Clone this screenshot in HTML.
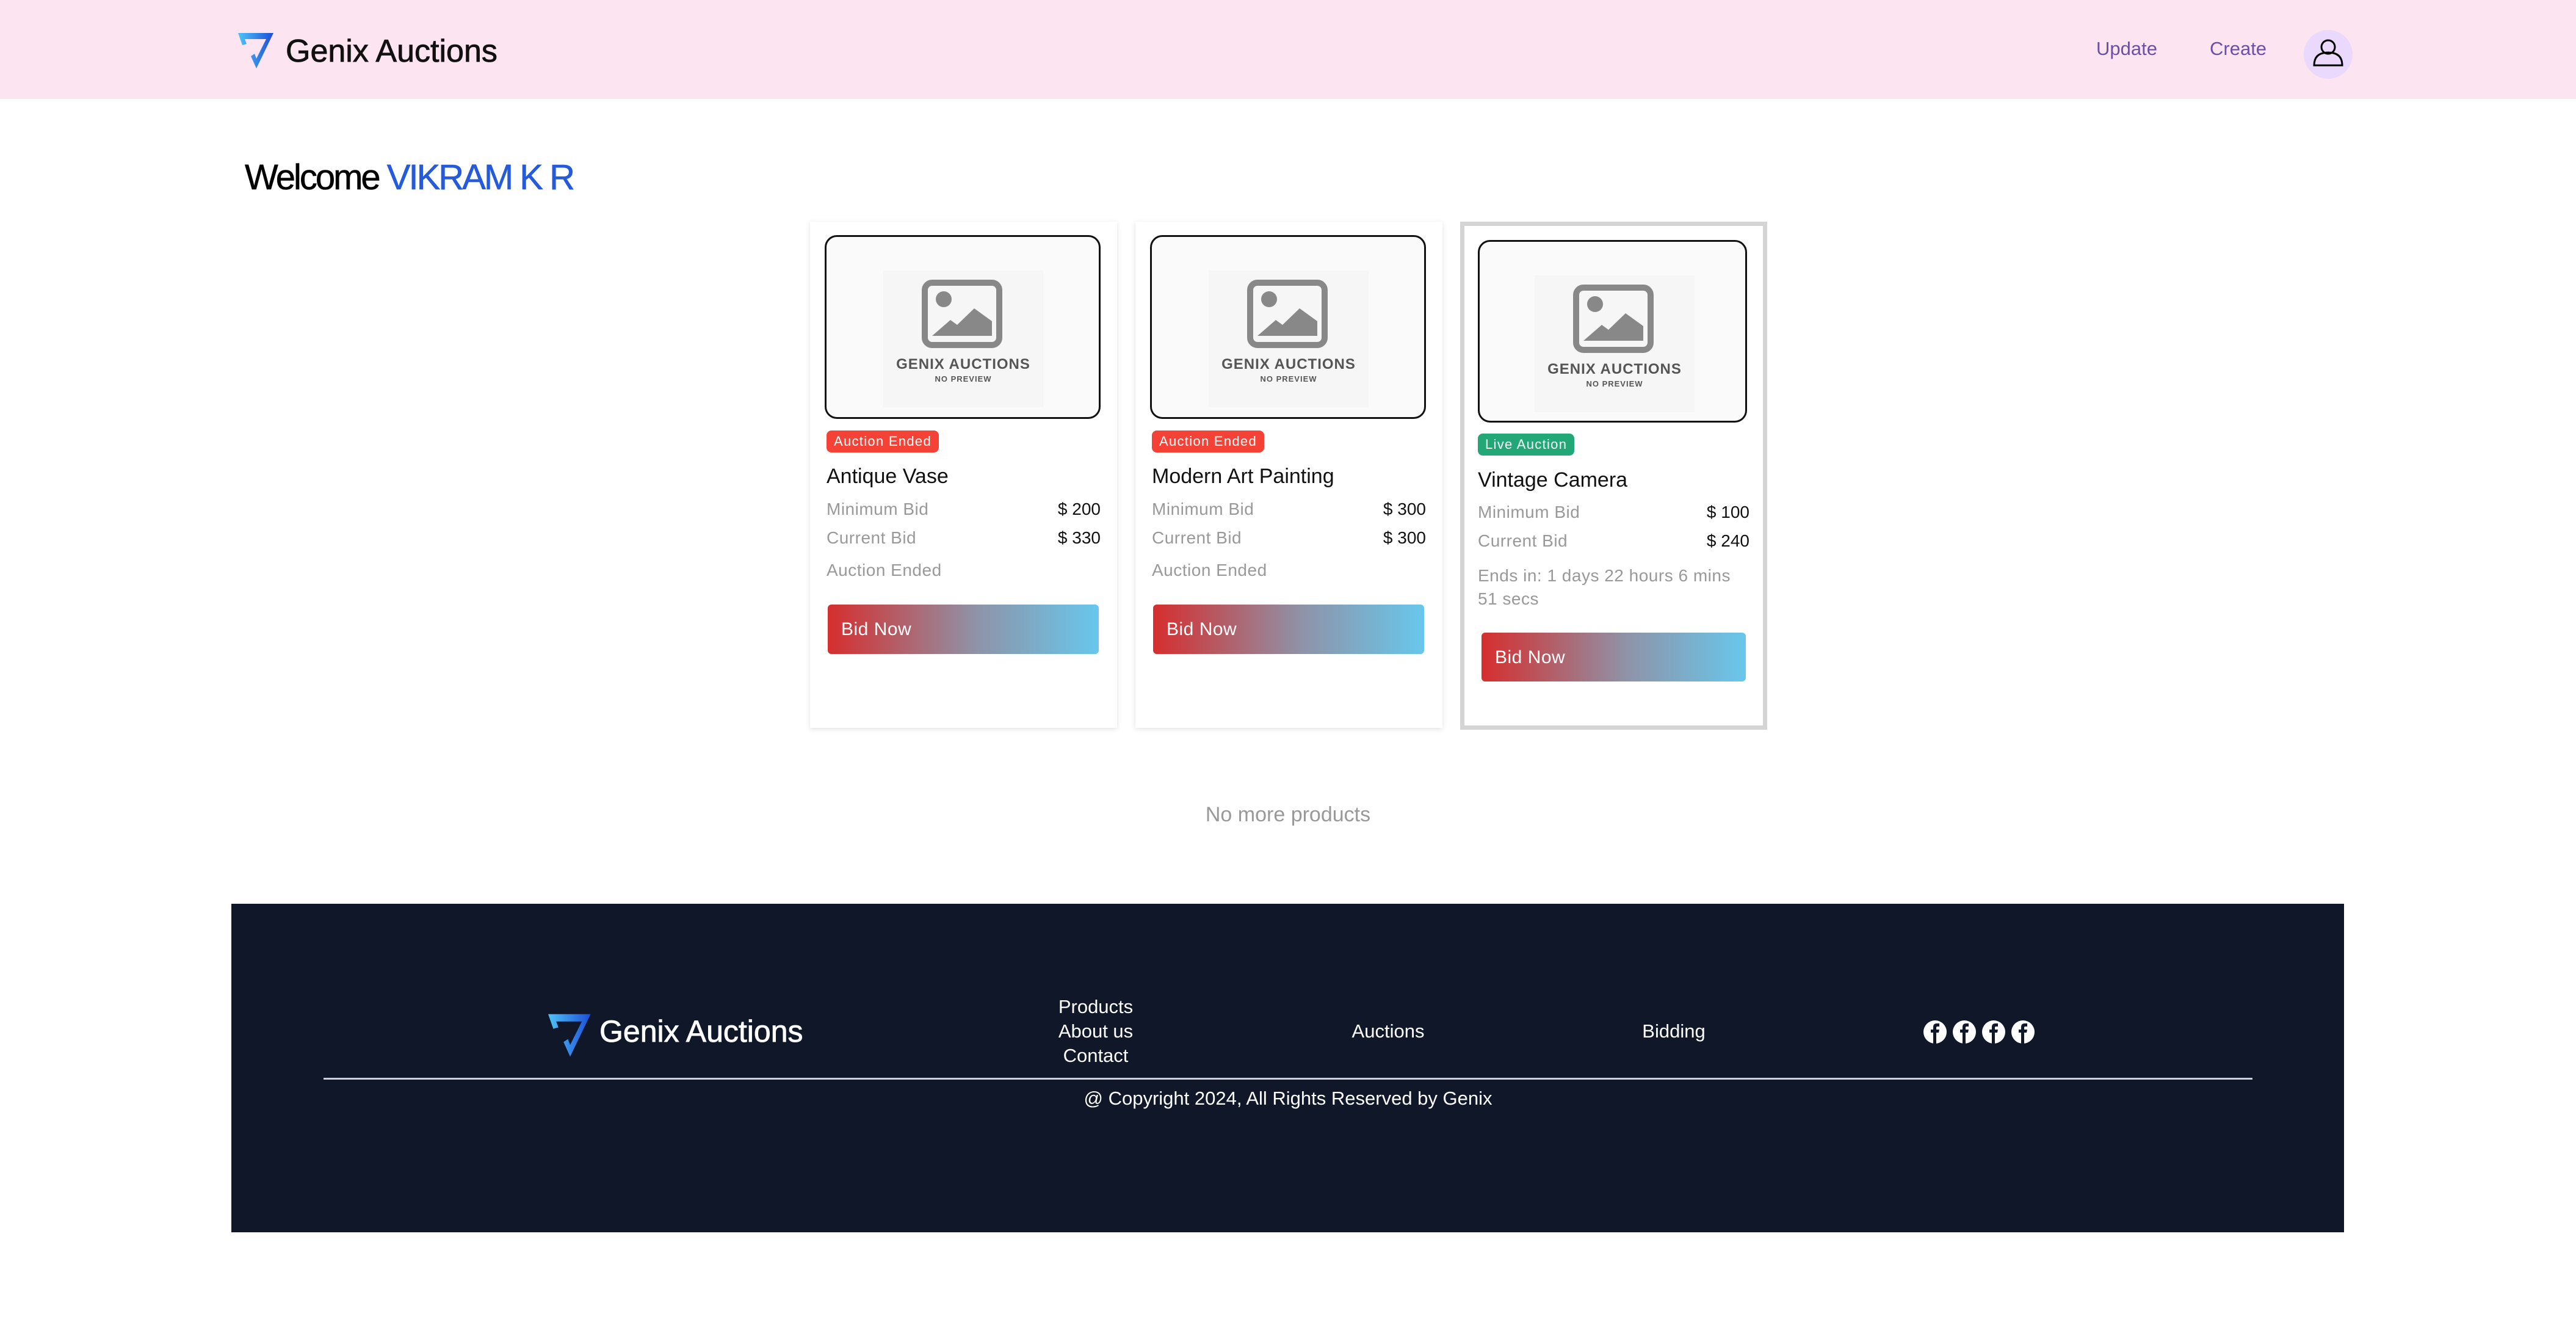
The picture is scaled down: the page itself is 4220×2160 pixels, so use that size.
<!DOCTYPE html>
<html><head><meta charset="utf-8"><style>
*{margin:0;padding:0;box-sizing:border-box}
body{width:4220px;height:2160px;background:#fff;font-family:"Liberation Sans",sans-serif;position:relative;overflow:hidden}
.a{position:absolute;white-space:nowrap}
.hdr{position:absolute;left:0;top:0;width:4220px;height:162px;background:#fde4f1}
.card{position:absolute;top:363px;width:503px;height:829px;background:#fff;box-shadow:0 2px 8px rgba(0,0,0,.12)}
.img{position:absolute;left:24px;top:22px;width:452px;height:301px;border:3px solid #111;border-radius:20px;background:#fafafa;overflow:hidden}
.ph{position:absolute;left:93px;top:55px;width:262px;height:224px;background:#f6f6f6}
.ph .t1{position:absolute;left:0;width:262px;text-align:center;top:140px;font-weight:bold;font-size:24px;color:#555;letter-spacing:1px}
.ph .t2{position:absolute;left:0;width:262px;text-align:center;top:170px;font-weight:bold;font-size:13px;color:#555;letter-spacing:1px}
.badge{position:absolute;left:27px;height:36px;border-radius:8px;color:#fff;font-size:22px;line-height:36px;padding:0 12px;letter-spacing:1.3px}
.ttl{position:absolute;left:27px;font-size:34px;color:#111;font-weight:500}
.lbl{position:absolute;left:27px;font-size:28px;color:#999;letter-spacing:.5px}
.val{position:absolute;right:27px;font-size:28px;color:#111}
.btn{position:absolute;left:29px;width:444px;height:81px;border-radius:6px;background:linear-gradient(90deg,#d62e2e,#8e93a8 55%,#68c7ec);color:#fff;font-size:30px;line-height:81px;padding-left:22px;letter-spacing:.5px}
.foot{position:absolute;left:379px;top:1480px;width:3461px;height:538px;background:#0f1729}
.fl{position:absolute;color:#fff;font-size:31px;white-space:nowrap;transform:translateX(-50%)}
</style></head><body>
<div class="hdr"></div>
<svg class="a" style="left:380px;top:40px" width="80" height="80" viewBox="0 0 80 80"><defs><linearGradient id="g" x1="0" x2="1"><stop offset="0" stop-color="#4fc3f7"/><stop offset="1" stop-color="#1d4ed8"/></linearGradient></defs><polygon points="10,14 68,14 40,72 31,52 37,48 40,56 56,24 21,24 24,32 17,34" fill="url(#g)"/></svg>
<div class="a" style="left:468px;top:54px;font-size:52px;color:#111;-webkit-text-stroke:0.8px #111">Genix Auctions</div>
<div class="a" style="left:3434px;top:62px;font-size:31px;color:#6b4fa8">Update</div>
<div class="a" style="left:3620px;top:62px;font-size:31px;color:#6b4fa8">Create</div>
<div class="a" style="left:3774px;top:49px;width:80px;height:80px;border-radius:50%;background:#ead9fc"></div>
<svg class="a" style="left:3786px;top:60px" width="56" height="56" viewBox="0 0 56 56"><circle cx="28" cy="17" r="11" fill="none" stroke="#000" stroke-width="3"/><path d="M5 47 Q5 26 28 26 Q51 26 51 47 Z" fill="none" stroke="#000" stroke-width="3"/></svg>
<div class="a" style="left:401px;top:257px;font-size:58px;color:#000;letter-spacing:-3px;-webkit-text-stroke:0.6px currentColor">Welcome <span style="color:#255bdb">VIKRAM K R</span></div>

<!-- card 1 -->
<div class="card" style="left:1327px">
<div class="img"><div class="ph"><svg style="position:absolute;left:63px;top:15px" width="132" height="112" viewBox="0 0 132 112"><rect x="5" y="5" width="122" height="102" rx="12" fill="none" stroke="#888" stroke-width="10"/><circle cx="36" cy="32" r="13" fill="#888"/><path d="M17 92 L47 66 L58 74 L86 47 L115 68 L115 92 Z" fill="#888"/></svg><div class="t1">GENIX AUCTIONS</div><div class="t2">NO PREVIEW</div></div></div>
<div class="badge" style="top:342px;background:#f44336">Auction Ended</div>
<div class="ttl" style="top:398px">Antique Vase</div>
<div class="lbl" style="top:455px">Minimum Bid</div><div class="val" style="top:455px">$ 200</div>
<div class="lbl" style="top:502px">Current Bid</div><div class="val" style="top:502px">$ 330</div>
<div class="lbl" style="top:555px">Auction Ended</div>
<div class="btn" style="top:627px">Bid Now</div>
</div>
<!-- card 2 -->
<div class="card" style="left:1860px">
<div class="img"><div class="ph"><svg style="position:absolute;left:63px;top:15px" width="132" height="112" viewBox="0 0 132 112"><rect x="5" y="5" width="122" height="102" rx="12" fill="none" stroke="#888" stroke-width="10"/><circle cx="36" cy="32" r="13" fill="#888"/><path d="M17 92 L47 66 L58 74 L86 47 L115 68 L115 92 Z" fill="#888"/></svg><div class="t1">GENIX AUCTIONS</div><div class="t2">NO PREVIEW</div></div></div>
<div class="badge" style="top:342px;background:#f44336">Auction Ended</div>
<div class="ttl" style="top:398px">Modern Art Painting</div>
<div class="lbl" style="top:455px">Minimum Bid</div><div class="val" style="top:455px">$ 300</div>
<div class="lbl" style="top:502px">Current Bid</div><div class="val" style="top:502px">$ 300</div>
<div class="lbl" style="top:555px">Auction Ended</div>
<div class="btn" style="top:627px">Bid Now</div>
</div>
<!-- card 3 -->
<div class="card" style="left:2392px;height:832px;border:7px solid #d4d4d4;box-shadow:none">
<div class="img" style="left:22px;top:23px;width:441px;height:299px"><div class="ph" style="left:90px"><svg style="position:absolute;left:63px;top:15px" width="132" height="112" viewBox="0 0 132 112"><rect x="5" y="5" width="122" height="102" rx="12" fill="none" stroke="#888" stroke-width="10"/><circle cx="36" cy="32" r="13" fill="#888"/><path d="M17 92 L47 66 L58 74 L86 47 L115 68 L115 92 Z" fill="#888"/></svg><div class="t1">GENIX AUCTIONS</div><div class="t2">NO PREVIEW</div></div></div>
<div class="badge" style="top:340px;left:22px;background:#22a876">Live Auction</div>
<div class="ttl" style="top:397px;left:22px">Vintage Camera</div>
<div class="lbl" style="top:453px;left:22px">Minimum Bid</div><div class="val" style="top:453px;right:22px">$ 100</div>
<div class="lbl" style="top:500px;left:22px">Current Bid</div><div class="val" style="top:500px;right:22px">$ 240</div>
<div class="lbl" style="top:554px;left:22px;line-height:38px;white-space:normal;width:420px">Ends in: 1 days 22 hours 6 mins 51 secs</div>
<div class="btn" style="top:666px;left:28px;width:433px;height:80px">Bid Now</div>
</div>

<div class="a" style="left:0;width:4220px;text-align:center;top:1315px;font-size:34px;color:#999">No more products</div>

<div class="foot"></div>
<svg class="a" style="left:886px;top:1644px" width="96" height="96" viewBox="0 0 80 80"><polygon points="10,14 68,14 40,72 31,52 37,48 40,56 56,24 21,24 24,32 17,34" fill="url(#g)"/></svg>
<div class="a" style="left:982px;top:1660px;font-size:50px;color:#fff;-webkit-text-stroke:0.8px #fff">Genix Auctions</div>
<div class="fl" style="left:1795px;top:1631px">Products</div>
<div class="fl" style="left:1795px;top:1671px">About us</div>
<div class="fl" style="left:1795px;top:1711px">Contact</div>
<div class="fl" style="left:2274px;top:1671px">Auctions</div>
<div class="fl" style="left:2742px;top:1671px">Bidding</div>
<svg class="a" style="left:3150px;top:1669px" width="190" height="42" viewBox="0 0 190 42">
<g id="fb"><circle cx="20" cy="21" r="19" fill="#fff"/><path d="M17 40 V22 H13 V17 H17 V13 Q17 7 23 7 H27 V12 H24 Q22 12 22 14 V17 H27 L26 22 H22 V40 Z" fill="#0f1729"/></g>
<use href="#fb" x="48"/><use href="#fb" x="96"/><use href="#fb" x="144"/>
</svg>
<div class="a" style="left:530px;top:1765px;width:3160px;height:3px;background:#cfcfd6"></div>
<div class="fl" style="left:2110px;top:1781px">@ Copyright 2024, All Rights Reserved by Genix</div>
</body></html>
